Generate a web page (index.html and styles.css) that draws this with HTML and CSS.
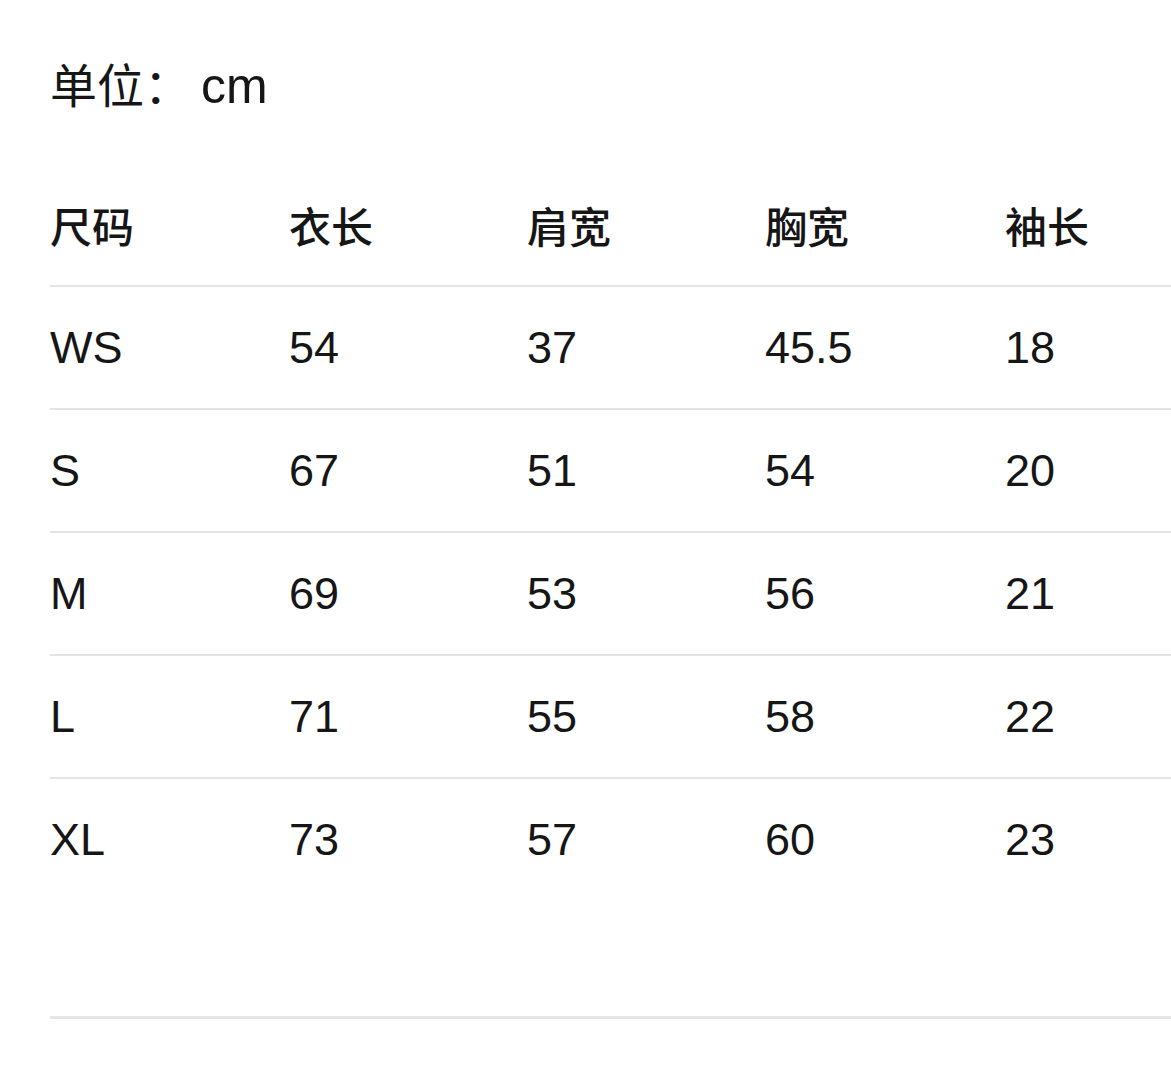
FILE: index.html
```html
<!DOCTYPE html>
<html lang="zh-CN">
<head>
<meta charset="utf-8">
<title>尺码表</title>
<link rel="stylesheet" href="styles.css">
</head>
<body>
<div class="page">
  <div class="unit">单位：<span class="unit-val">cm</span></div>
  <div class="table">
    <div class="row head">
      <div>尺码</div><div>衣长</div><div>肩宽</div><div>胸宽</div><div>袖长</div>
    </div>
    <div class="row">
      <div>WS</div><div>54</div><div>37</div><div>45.5</div><div>18</div>
    </div>
    <div class="row">
      <div>S</div><div>67</div><div>51</div><div>54</div><div>20</div>
    </div>
    <div class="row">
      <div>M</div><div>69</div><div>53</div><div>56</div><div>21</div>
    </div>
    <div class="row">
      <div>L</div><div>71</div><div>55</div><div>58</div><div>22</div>
    </div>
    <div class="row last">
      <div>XL</div><div>73</div><div>57</div><div>60</div><div>23</div>
    </div>
  </div>
  <div class="bottom-rule"></div>
</div>
</body>
</html>
```

FILE: styles.css
```css
html, body {
  margin: 0;
  padding: 0;
  background: #ffffff;
  overflow: hidden;
}
body {
  width: 1171px;
  height: 1083px;
  font-family: "Liberation Sans", "Noto Sans CJK SC", sans-serif;
  color: #161616;
}
.page {
  padding: 56px 0 0 50px;
  overflow: hidden;
}
.unit {
  font-size: 47px;
  line-height: 60px;
  height: 60px;
  white-space: nowrap;
}
.unit-val {
  font-size: 50px;
  margin-left: 10px;
}
.table {
  margin-top: 48px;
  width: 1200px;
}
.row {
  display: grid;
  grid-template-columns: 239px 238px 238px 240px 240px;
  align-items: center;
  height: 121px;
  border-bottom: 2px solid #e4e4e4;
  font-size: 45px;
}
.row.head {
  font-family: "Noto Sans CJK SC", sans-serif;
  font-weight: 500;
  font-size: 42px;
}
.row.last {
  border-bottom: none;
}
.bottom-rule {
  margin-top: 116px;
  height: 3px;
  width: 1200px;
  background: #e6e6e6;
}
```
